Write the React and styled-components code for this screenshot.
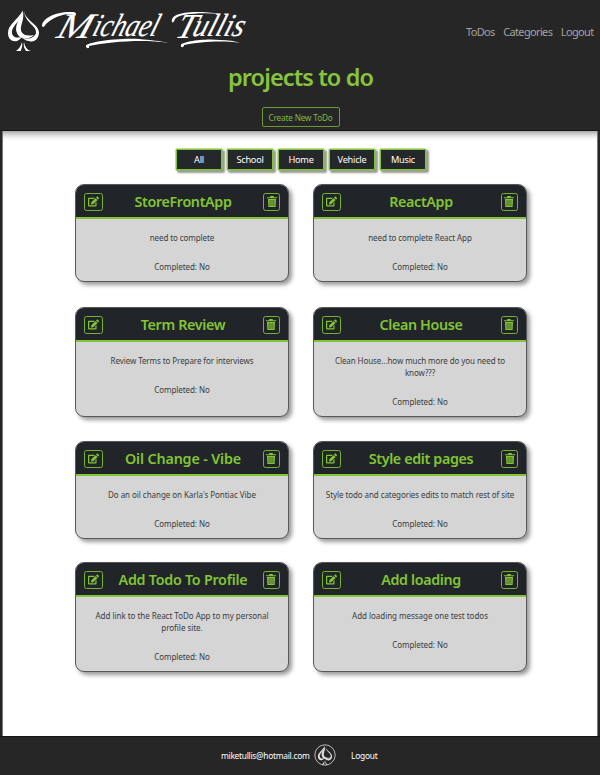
import React from "react";
import styled, { createGlobalStyle } from "styled-components";
import { FaEdit } from "react-icons/fa";

const GlobalStyle = createGlobalStyle`
  * { box-sizing: border-box; }
  body {
    margin: 0;
    background: #262626;
    font-family: "Noto Sans", "Open Sans", sans-serif;
    color: #3a3c40;
  }
  button { font-family: inherit; padding: 0; }
  a { color: inherit; text-decoration: none; }
`;

const Page = styled.div`
  width: 600px;
  height: 775px;
  display: flex;
  flex-direction: column;
  background: #262626;
  overflow: hidden;
`;

const Header = styled.header`
  height: 131px;
  flex: none;
  display: flex;
  flex-direction: column;
  align-items: center;
  border-bottom: 1px solid #151515;
`;

const NavBar = styled.div`
  width: 100%;
  height: 62px;
  display: flex;
  justify-content: space-between;
`;

const LogoSvg = styled.svg`
  display: block;
  width: 255px;
  height: 60px;
`;

const LogoText = styled.text`
  font-family: "Liberation Serif", serif;
  font-style: italic;
  fill: #fff;
  stroke: #fff;
  stroke-width: 0.15px;
`;

const NavLinks = styled.nav`
  display: flex;
  gap: 8.5px;
  padding: 24px 6.5px 0 0;
  font-size: 11px;
  line-height: 16px;
  color: #a3a3a3;
`;

const NavLink = styled.a`
  letter-spacing: -0.65px;
`;

const PageTitle = styled.h1`
  margin: 0;
  height: 45px;
  padding-left: 1px;
  font-size: 23.5px;
  font-weight: 600;
  line-height: 31px;
  letter-spacing: -0.9px;
  color: #86c440;
`;

const CreateButton = styled.button`
  width: 78px;
  height: 20px;
  margin-left: 1px;
  border: 1px solid #699a35;
  border-radius: 2px;
  background: transparent;
  color: #80b944;
  font-size: 8.2px;
  letter-spacing: -0.15px;
`;

const Main = styled.main`
  height: 605px;
  flex: none;
  margin: 0 2px;
  border: 1px solid #777;
  border-width: 0 1px;
  background: linear-gradient(#a6a6a6, #d0d0d0 3px, #f4f4f4 7px, #fff 10px);
  display: flex;
  flex-direction: column;
  align-items: center;
`;

const Filters = styled.div`
  display: flex;
  gap: 5px;
  margin: 18px 0 0 2px;
`;

const FilterButton = styled.button`
  width: 46px;
  height: 21px;
  border: 1px solid #82c434;
  border-radius: 1px;
  background: #25282b;
  color: #fff;
  font-size: 9.2px;
  letter-spacing: -0.25px;
  box-shadow: 0 0 0 0.5px #82c434, 2px 2px 2px 1px rgba(0, 0, 0, 0.4);
`;

const CardGrid = styled.div`
  display: grid;
  grid-template-columns: 214px 214px;
  grid-template-rows: 123px 134px 121px 110px;
  column-gap: 24px;
  align-items: start;
  margin: 14px 0 0 2px;
`;

const Card = styled.article`
  height: ${(p) => (p.$tall ? 110 : 98)}px;
  border: 1px solid #55595a;
  border-radius: 9px;
  overflow: hidden;
  background: #d5d5d5;
  box-shadow: 3px 3px 4px rgba(0, 0, 0, 0.4);
`;

const CardHeader = styled.div`
  height: 34px;
  display: flex;
  align-items: center;
  justify-content: space-between;
  padding: 1px 8px 0;
  background: #212529;
  border-bottom: 2px solid #82c434;
`;

const CardTitle = styled.h2`
  margin: 0;
  font-size: 14.3px;
  font-weight: 600;
  line-height: 20px;
  white-space: nowrap;
  letter-spacing: ${(p) => p.$spacing}px;
  color: #82c434;
`;

const IconButton = styled.button`
  display: flex;
  align-items: center;
  justify-content: center;
  width: ${(p) => p.$width}px;
  height: 18px;
  border: 1px solid #75b32f;
  border-radius: 2.5px;
  background: transparent;
  color: #82c434;
  font-size: 11px;
`;

const CardBody = styled.div`
  padding: 12.5px 9px 0;
  text-align: center;
  font-size: 8px;
  line-height: 12.3px;
`;

const Description = styled.p`
  margin: 0 0 17px;
  letter-spacing: ${(p) => p.$spacing}px;
`;

const Status = styled.p`
  margin: 0;
  letter-spacing: -0.08px;
`;

const Footer = styled.footer`
  flex: 1;
  display: flex;
  align-items: center;
  padding: 0 0 2px 221px;
  border-top: 1px solid #161616;
  font-size: 8.4px;
  color: #fff;
`;

const Email = styled.a`
  width: 88px;
  letter-spacing: -0.28px;
  white-space: nowrap;
`;

const Badge = styled.svg`
  width: 22px;
  height: 22px;
  margin: 0 15px 0 5px;
`;

const FooterLink = styled.a`
  letter-spacing: -0.2px;
`;

const Spade = () => (
  <>
    <path d="M23 10C18 20 8 24 8 33C8 39 12 42 17 41C20 40 21 38 21 37C14 39 11.500 35 12 31C13 25 21 21 23 10Z" />
    <path d="M23 11C19 19 14 27 17 33C19 39 27 41 34 35C24 37 20 33 21 27C22 22 24 19 23 11Z" />
    <path d="M24 11C25 20 38 24 39 32C39 39 34 43 29 41C26 41 24 39 23 38C29 40 36 37 36 32C36 25 25 23 24 11Z" />
    <path d="M22 42C21 46 19 49 16 51H21C21 49 23 47 22 42ZM24 42C25 47 27 50 31 51H26C25 49 23 47 24 42Z" />
  </>
);

const Logo = () => (
  <LogoSvg viewBox="0 0 255 60" fill="#fff" role="img" aria-label="Michael Tullis">
    <Spade />
    <g transform="translate(0 36) skewX(-18)">
      <LogoText x="56" y="2" fontSize="36" textLength="34" lengthAdjust="spacingAndGlyphs">M</LogoText>
      <LogoText x="91" y="0" fontSize="32" textLength="65" lengthAdjust="spacingAndGlyphs">ichael</LogoText>
      <LogoText x="175" y="2" fontSize="35" textLength="19" lengthAdjust="spacingAndGlyphs">T</LogoText>
      <LogoText x="191" y="0" fontSize="32" textLength="51" lengthAdjust="spacingAndGlyphs">ullis</LogoText>
    </g>
    <path d="M42 26C42 18 57 11 72 12C76 12 77 14 75 16C71 11 54 16 46 24C44 27 43 28 42 26Z" />
    <path d="M172 22C170 14 186 9 222 14C200 12 178 14 175 19C174 22 173 23 172 22Z" />
    <path d="M86 46C86 43 112 38 139 39C151 40 161 41 168 43C143 39 109 42 89 46C90 49 86 49 86 46Z" />
    <path d="M181 45C181 42 204 38 220 40C228 40 235 41 240 43C222 40 200 42 184 45C184 48 180 48 181 45Z" />
  </LogoSvg>
);

const TrashIcon = () => (
  <svg width="10" height="11" viewBox="0 0 10 11" fill="currentColor">
    <path d="M3.200 0h3.600v1.200H10v1H0v-1h3.200zM1 3h8l-.4 8H1.400z" />
    <path d="M3.100 4v6M5 4v6M6.900 4v6" stroke="#212529" strokeWidth=".6" />
  </svg>
);

const filters = ["All", "School", "Home", "Vehicle", "Music"];

const todos = [
  { title: "StoreFrontApp", text: "need to complete" },
  { title: "ReactApp", text: "need to complete React App" },
  { title: "Term Review", text: "Review Terms to Prepare for interviews", tall: true },
  { title: "Clean House", text: "Clean House...how much more do you need to know???", tall: true },
  { title: "Oil Change - Vibe", titleSpacing: -0.15, text: "Do an oil change on Karla's Pontiac Vibe", spacing: -0.05 },
  { title: "Style edit pages", text: "Style todo and categories edits to match rest of site" },
  { title: "Add Todo To Profile", titleSpacing: -0.25, text: "Add link to the React ToDo App to my personal profile site.", spacing: -0.03, tall: true },
  { title: "Add loading", text: "Add loading message one test todos", spacing: -0.03, tall: true },
];

const TodoCard = ({ todo }) => (
  <Card $tall={todo.tall}>
    <CardHeader>
      <IconButton $width={19} aria-label="Edit"><FaEdit /></IconButton>
      <CardTitle $spacing={todo.titleSpacing ?? -0.35}>{todo.title}</CardTitle>
      <IconButton $width={17} aria-label="Delete"><TrashIcon /></IconButton>
    </CardHeader>
    <CardBody>
      <Description $spacing={todo.spacing ?? -0.08}>{todo.text}</Description>
      <Status>Completed: No</Status>
    </CardBody>
  </Card>
);

export default function App() {
  return (
    <Page>
      <GlobalStyle />
      <Header>
        <NavBar>
          <Logo />
          <NavLinks>
            <NavLink href="#">ToDos</NavLink>
            <NavLink href="#">Categories</NavLink>
            <NavLink href="#">Logout</NavLink>
          </NavLinks>
        </NavBar>
        <PageTitle>projects to do</PageTitle>
        <CreateButton>Create New ToDo</CreateButton>
      </Header>
      <Main>
        <Filters>
          {filters.map((name) => <FilterButton key={name}>{name}</FilterButton>)}
        </Filters>
        <CardGrid>
          {todos.map((todo) => <TodoCard key={todo.title} todo={todo} />)}
        </CardGrid>
      </Main>
      <Footer>
        <Email href="#">miketullis@hotmail.com</Email>
        <Badge viewBox="0 0 22 22" fill="#ddd">
          <circle cx="11" cy="11" r="10.200" fill="none" stroke="#ddd" strokeWidth=".8" />
          <g transform="translate(.2 -2.700) scale(.46)"><Spade /></g>
        </Badge>
        <FooterLink href="#">Logout</FooterLink>
      </Footer>
    </Page>
  );
}
